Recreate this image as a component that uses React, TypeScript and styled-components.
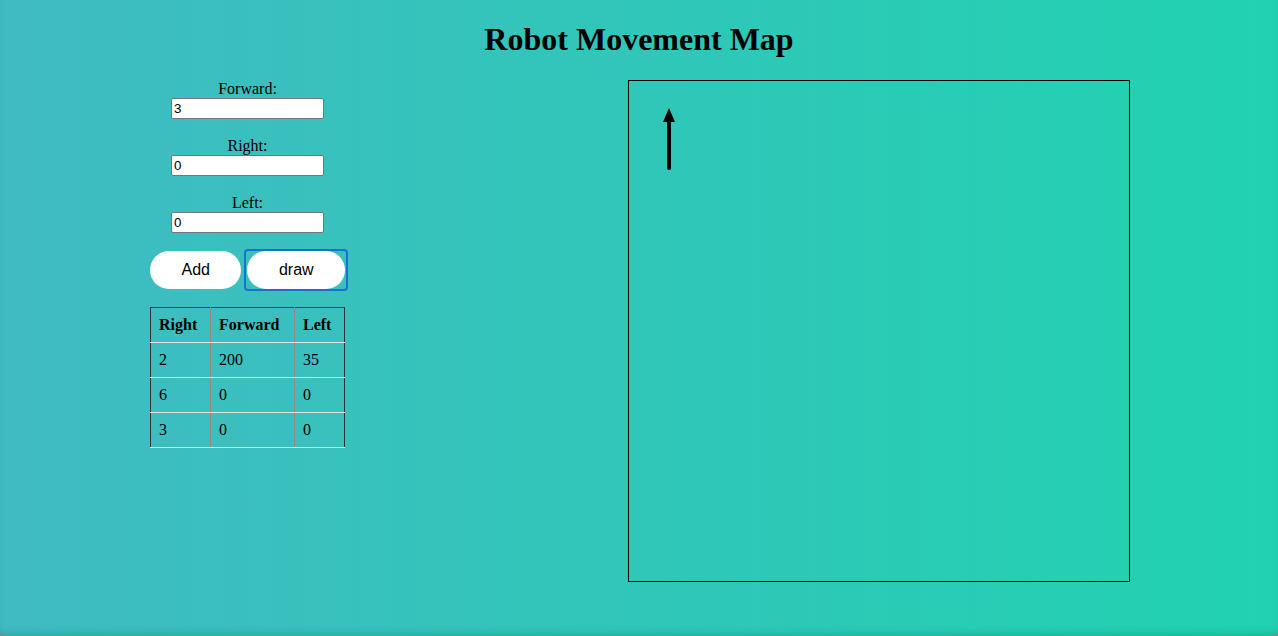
import React from "react";
import styled, { createGlobalStyle } from "styled-components";

const GlobalStyle = createGlobalStyle`
  html, body { margin: 0; padding: 0; background: #7f8c8c; }
  body { font-family: "Liberation Serif", "Times New Roman", serif; color: #000; }
`;

const Page = styled.div`
  height: 635px;
  box-sizing: border-box;
  background: linear-gradient(90deg, #40bbc2 0%, #21d2b0 100%);
  border-radius: 0 0 4px 4px;
  box-shadow: inset 0 -6px 10px -6px rgba(0, 60, 60, 0.25);
  overflow: hidden;
`;

const Title = styled.h1`
  margin: 21px 0 22px;
  font-size: 32px;
  line-height: 37px;
  font-weight: bold;
  text-align: center;
`;

const Main = styled.div`
  display: flex;
  justify-content: space-between;
  align-items: flex-start;
  padding: 0 148px 0 150px;
`;

const Controls = styled.div`
  width: 195px;
  display: flex;
  flex-direction: column;
  align-items: center;
`;

const Field = styled.label`
  display: flex;
  flex-direction: column;
  align-items: center;
  margin-bottom: 18px;
  font-size: 16px;
  line-height: 18px;
`;

const Input = styled.input`
  width: 153px;
  height: 21px;
  box-sizing: border-box;
  border: 1px solid #767676;
  border-radius: 2px;
  padding: 1px 2px;
  font-family: "Liberation Sans", Arial, sans-serif;
  font-size: 13.33px;
  background: #fff;
  color: #000;
`;

const ButtonRow = styled.div`
  align-self: flex-start;
  display: flex;
  align-items: center;
  gap: 3px;
  margin: -2px 0 16px;
`;

const Button = styled.button`
  height: 38px;
  padding: 0 31.5px;
  border: none;
  border-radius: 19px;
  background: #fff;
  font-family: "Liberation Sans", Arial, sans-serif;
  font-size: 16px;
  color: #000;
  cursor: pointer;
`;

const FocusRing = styled.span`
  display: inline-flex;
  padding: 0 1px;
  border: 2px solid #1a6fd4;
  border-radius: 4px;
`;

const Table = styled.table`
  width: 195px;
  table-layout: fixed;
  border-collapse: collapse;
  border-top: 1px solid #333;
  border-left: 1px solid #333;
  border-right: 1px solid #333;
  font-size: 16px;
`;

const Cell = styled.td<{ $w?: number }>`
  height: 35px;
  padding: 0 8px;
  box-sizing: border-box;
  text-align: left;
  border-bottom: 1px solid #e2e2e2;
  border-left: 1px solid #9e8486;
  ${(p) => (p.$w ? `width: ${p.$w}px;` : "")}
  &:first-child { border-left: 1px solid #333; }
`;

const Head = styled(Cell).attrs({ as: "th" })`
  font-weight: bold;
`;

const Canvas = styled.div`
  width: 500px;
  height: 500px;
  border: 1px solid #000;
  position: relative;
`;

const Arrow = styled.svg`
  position: absolute;
  left: 30px;
  top: 20px;
`;

const rows = [
  [2, 200, 35],
  [6, 0, 0],
  [3, 0, 0],
];

export default function App() {
  return (
    <Page>
      <GlobalStyle />
      <Title>Robot Movement Map</Title>
      <Main>
        <Controls>
          <Field>
            Forward:
            <Input defaultValue="3" />
          </Field>
          <Field>
            Right:
            <Input defaultValue="0" />
          </Field>
          <Field>
            Left:
            <Input defaultValue="0" />
          </Field>
          <ButtonRow>
            <Button>Add</Button>
            <FocusRing>
              <Button>draw</Button>
            </FocusRing>
          </ButtonRow>
          <Table>
            <thead>
              <tr>
                <Head $w={60}>Right</Head>
                <Head $w={84}>Forward</Head>
                <Head>Left</Head>
              </tr>
            </thead>
            <tbody>
              {rows.map((r, i) => (
                <tr key={i}>
                  {r.map((v, j) => (
                    <Cell key={j}>{v}</Cell>
                  ))}
                </tr>
              ))}
            </tbody>
          </Table>
        </Controls>
        <Canvas>
          <Arrow width="20" height="70" viewBox="0 0 20 70">
            <line x1="10" y1="18" x2="10" y2="67" stroke="#000" strokeWidth="4" strokeLinecap="round" />
            <polygon points="10,7 4,21 16,21" fill="#000" />
          </Arrow>
        </Canvas>
      </Main>
    </Page>
  );
}
